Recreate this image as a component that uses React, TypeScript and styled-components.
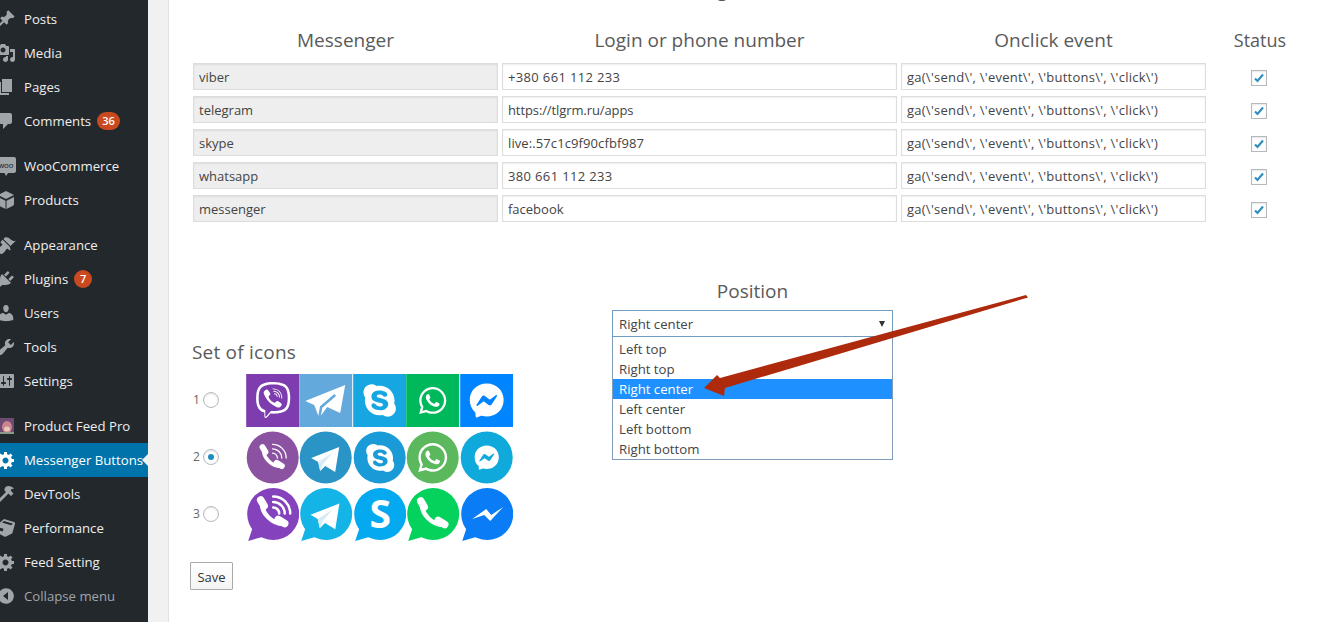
import { Fragment, ReactNode } from 'react';
import styled, { createGlobalStyle } from 'styled-components';
import { FaViber, FaSkype, FaWhatsapp, FaFacebookMessenger } from 'react-icons/fa';

const GlobalStyle = createGlobalStyle`
  html, body {
    margin: 0;
    padding: 0;
    height: 100%;
    overflow: hidden;
    background: #fff;
  }
  * {
    box-sizing: border-box;
  }
`;

const FONT = `'Open Sans', 'Noto Sans', sans-serif`;

const Page = styled.div`
  display: flex;
  width: 1333px;
  height: 622px;
  overflow: hidden;
  font-family: ${FONT};
  color: #444;
`;

const Sidebar = styled.nav`
  width: 148px;
  flex: none;
  padding-top: 2px;
  background: #23282d;
  overflow: hidden;
`;

const NavItem = styled.div<{ $gap?: boolean; $active?: boolean; $muted?: boolean }>`
  position: relative;
  display: flex;
  align-items: center;
  height: 34px;
  margin-top: ${({ $gap }) => ($gap ? '11px' : '0')};
  background: ${({ $active }) => ($active ? '#0073aa' : 'transparent')};
  color: ${({ $active, $muted }) => ($active ? '#fff' : $muted ? '#a0a5aa' : '#eee')};
  font-size: 13.2px;
  white-space: nowrap;
`;

const NavIcon = styled.svg<{ $active?: boolean }>`
  flex: none;
  width: 20px;
  height: 20px;
  margin-left: -4px;
  margin-right: 8px;
  fill: ${({ $active }) => ($active ? '#fff' : '#a0a5aa')};
`;

const Badge = styled.span`
  display: inline-block;
  min-width: 18px;
  height: 18px;
  margin-left: 6px;
  padding: 0 5px;
  border-radius: 9px;
  background: #ca4a1f;
  color: #fff;
  font-size: 11px;
  font-weight: 600;
  line-height: 18px;
  text-align: center;
`;

const Notch = styled.span`
  position: absolute;
  top: 11px;
  right: 0;
  width: 0;
  height: 0;
  border: 6px solid transparent;
  border-right-color: #f1f1f1;
  border-left-width: 0;
`;

const Gutter = styled.div`
  width: 21px;
  flex: none;
  background: #f1f1f1;
  border-right: 1px solid #e2e2e2;
`;

const Main = styled.main`
  flex: 1;
  min-width: 0;
  padding-left: 24px;
  background: #fff;
`;

const ClippedTitle = styled.h1`
  width: 1122px;
  height: 30px;
  margin: -26px 0 22px;
  padding-left: 470px;
  font-size: 20px;
  font-weight: 400;
  line-height: 30px;
  color: #555;
`;

const Table = styled.div`
  display: grid;
  grid-template-columns: 305px 395px 305px 100px;
  column-gap: 4px;
  row-gap: 6px;
`;

const HeadCell = styled.div<{ $small?: boolean }>`
  height: 31px;
  font-size: ${({ $small }) => ($small ? '18px' : '19px')};
  line-height: 29px;
  color: #5a5a5a;
  text-align: center;
`;

const Field = styled.input<{ $spread?: number }>`
  display: block;
  width: 100%;
  height: 27px;
  padding: 0 5px;
  border: 1px solid #ddd;
  border-radius: 0;
  outline: none;
  background: ${({ disabled }) => (disabled ? '#eeeeee' : '#fff')};
  box-shadow: inset 0 1px 2px rgba(0, 0, 0, 0.07);
  color: #444;
  font-family: ${FONT};
  font-size: 13px;
  letter-spacing: ${({ $spread }) => $spread ?? 0}px;
`;

const StatusCell = styled.div`
  display: flex;
  align-items: center;
  justify-content: center;
  height: 27px;
  padding: 2px 2px 0 0;
`;

const CheckBox = styled.span`
  display: flex;
  align-items: center;
  justify-content: center;
  width: 16px;
  height: 16px;
  border: 1px solid #b4b9be;
  background: #fff;
  box-shadow: inset 0 1px 2px rgba(0, 0, 0, 0.1);
`;

const Lower = styled.div`
  display: flex;
  align-items: flex-start;
  margin: 55px 0 0 -3px;
`;

const SetColumn = styled.div`
  width: 422px;
  flex: none;
  padding-top: 61px;
`;

const SectionTitle = styled.div<{ $center?: boolean }>`
  height: 28px;
  margin-left: ${({ $center }) => ($center ? '0' : '2px')};
  font-size: 19px;
  letter-spacing: ${({ $center }) => ($center ? '0' : '0.2px')};
  line-height: 28px;
  color: #5a5a5a;
  text-align: ${({ $center }) => ($center ? 'center' : 'left')};
`;

const IconRows = styled.div`
  display: flex;
  flex-direction: column;
  gap: 4px;
  margin-top: 8px;
`;

const IconRow = styled.div`
  display: flex;
  align-items: center;
  height: 53px;
  padding-left: 3px;
`;

const RowNumber = styled.span`
  width: 10px;
  flex: none;
  margin-top: -2px;
  font-size: 12px;
  color: #666;
`;

const Radio = styled.span<{ $checked?: boolean }>`
  display: flex;
  align-items: center;
  justify-content: center;
  width: 16px;
  height: 16px;
  flex: none;
  margin: -2px 27px 0 0;
  border: 1px solid #b4b9be;
  border-radius: 50%;
  background: #fff;
  box-shadow: inset 0 1px 2px rgba(0, 0, 0, 0.1);

  &::before {
    content: '';
    display: ${({ $checked }) => ($checked ? 'block' : 'none')};
    width: 6px;
    height: 6px;
    border-radius: 50%;
    background: #1e8cbe;
  }
`;

const IconStrip = styled.div`
  display: grid;
  grid-template-columns: repeat(5, 1fr);
  width: 267px;
  height: 53px;

  > svg {
    display: block;
    width: 100%;
    height: 100%;
  }
`;

const SaveButton = styled.button`
  display: block;
  width: 43px;
  height: 28px;
  margin-top: 21px;
  padding: 1px 0 0;
  border: 1px solid #aaa;
  border-radius: 1px;
  background: linear-gradient(#fff, #f4f4f4);
  color: #333;
  font-family: ${FONT};
  font-size: 13px;
`;

const PositionColumn = styled.div`
  position: relative;
  width: 281px;
  flex: none;
`;

const SelectBox = styled.div`
  display: flex;
  align-items: center;
  justify-content: space-between;
  height: 27px;
  margin-top: 5px;
  padding: 1px 7px 0 6px;
  border: 1px solid #6f9cc0;
  font-size: 13.2px;
  color: #444;
`;

const Caret = styled.span`
  width: 0;
  height: 0;
  border-top: 6px solid #333;
  border-left: 3px solid transparent;
  border-right: 3px solid transparent;
`;

const OptionList = styled.div`
  padding-top: 2px;
  border: 1px solid #7f9db9;
  border-top: none;
`;

const Option = styled.div<{ $selected?: boolean }>`
  height: 20px;
  padding-left: 6px;
  background: ${({ $selected }) => ($selected ? '#1e90ff' : 'transparent')};
  color: ${({ $selected }) => ($selected ? '#fff' : '#444')};
  font-size: 13.2px;
  line-height: 20px;
`;

const Arrow = styled.svg`
  position: absolute;
  top: 15px;
  left: 88px;
  width: 340px;
  height: 106px;
  overflow: visible;
`;

const Handset = ({ arcs, scale = 1, x = 0, y = 0, thin }: { arcs?: boolean; scale?: number; x?: number; y?: number; thin?: boolean }) => (
  <g transform={`translate(${x} ${y}) scale(${scale})`} fill="none" stroke="#fff" strokeLinecap="round">
    <path d="M17 17C16 27 27 38 38 38" strokeWidth="4.5" />
    <path d="M15.500 14L19 20" strokeWidth="7.500" />
    <path d="M33 33.500L39.500 37.500" strokeWidth="7.500" />
    {arcs && (
      <g strokeWidth={thin ? 1.6 : 2.5}>
        <path d="M28 21.500a6 6 0 0 1 6 6" />
        <path d="M28 16a11.500 11.500 0 0 1 11.500 11.500" />
        <path d="M28 10.500a17 17 0 0 1 17 17" />
      </g>
    )}
  </g>
);

const Plane = ({ shade = '#d8ecf6' }: { shade?: string }) => (
  <g>
    <polygon points="12,27 40,16 36,41 26,35 21,40 19,31" fill="#fff" />
    <polygon points="19,31 33,22 24,33 21,40" fill={shade} />
  </g>
);

const Square = ({ color, children }: { color: string; children: ReactNode }) => (
  <svg viewBox="0 0 53 53">
    <rect width="53" height="53" fill={color} />
    {children}
  </svg>
);

const Round = ({ color, children }: { color: string; children: ReactNode }) => (
  <svg viewBox="0 0 53 53">
    <circle cx="26.500" cy="26.500" r="26" fill={color} />
    {children}
  </svg>
);

const Bubble = ({ color, children }: { color: string; children: ReactNode }) => (
  <svg viewBox="0 0 53 53">
    <circle cx="27" cy="26" r="26" fill={color} />
    <polygon points="2,53 7,38 16,49" fill={color} />
    {children}
  </svg>
);

const rows: { id: number; checked?: boolean; icons: ReactNode[] }[] = [
  {
    id: 1,
    icons: [
      <Square key="v" color="#7d3daf">
        <FaViber x={9} y={8} size={36} color="#fff" />
      </Square>,
      <Square key="t" color="#64a9dc">
        <polygon points="6,27 46,11 41,39 28,33 20,44 15,31" fill="#fff" />
        <polyline points="20,44 22,33 36,21" fill="none" stroke="#64a9dc" strokeWidth="2.500" />
      </Square>,
      <Square key="s" color="#16a7e2">
        <FaSkype x={8} y={8} size={37} color="#fff" />
      </Square>,
      <Square key="w" color="#00b85c">
        <FaWhatsapp x={11} y={11} size={31} color="#fff" />
      </Square>,
      <Square key="m" color="#0084ff">
        <FaFacebookMessenger x={9} y={9} size={35} color="#fff" />
      </Square>,
    ],
  },
  {
    id: 2,
    checked: true,
    icons: [
      <Round key="v" color="#8b52a1">
        <Handset arcs thin scale={0.8} x={4} y={5} />
      </Round>,
      <Round key="t" color="#2b94c6">
        <Plane />
      </Round>,
      <Round key="s" color="#1a9bd7">
        <FaSkype x={11} y={11} size={32} color="#fff" />
      </Round>,
      <Round key="w" color="#5cb85c">
        <FaWhatsapp x={10} y={10} size={33} color="#fff" />
      </Round>,
      <Round key="m" color="#0fa9dc">
        <FaFacebookMessenger x={14} y={14} size={25} color="#fff" />
      </Round>,
    ],
  },
  {
    id: 3,
    icons: [
      <Bubble key="v" color="#8443bd">
        <Handset arcs x={-1} y={-2} />
      </Bubble>,
      <Bubble key="t" color="#14b5e6">
        <g transform="translate(-1 -1) scale(1.03)">
          <Plane />
        </g>
      </Bubble>,
      <Bubble key="s" color="#05a9f0">
        <text x="27" y="40" fill="#fff" fontFamily="'Open Sans', sans-serif" fontSize="39" fontWeight="700" textAnchor="middle">
          S
        </text>
      </Bubble>,
      <Bubble key="w" color="#04d25d">
        <Handset x={-1} y={-1} />
      </Bubble>,
      <Bubble key="m" color="#0a7cf5">
        <polygon points="12,31 26,21 31,27 43,19 30,33 24,27" fill="#fff" />
      </Bubble>,
    ],
  },
];

const channels = [
  { name: 'viber', login: '+380 661 112 233', spread: 0.35 },
  { name: 'telegram', login: 'https://tlgrm.ru/apps', spread: -0.1 },
  { name: 'skype', login: 'live:.57c1c9f90cfbf987', spread: 0.1 },
  { name: 'whatsapp', login: '380 661 112 233', spread: 0.35 },
  { name: 'messenger', login: 'facebook', spread: 0 },
];

const positions = ['Left top', 'Right top', 'Right center', 'Left center', 'Left bottom', 'Right bottom'];

const GEAR =
  'M18 12h-2.180c-.17.7-.44 1.350-.81 1.930l1.540 1.540-2.100 2.100-1.540-1.540c-.58.36-1.230.63-1.910.79V19H8v-2.180c-.68-.16-1.330-.43-1.910-.79l-1.540 1.540-2.120-2.120 1.540-1.540c-.36-.58-.63-1.230-.79-1.910H1V9.030h2.170c.16-.7.44-1.350.8-1.940L2.430 5.550l2.100-2.100 1.540 1.540c.58-.37 1.240-.64 1.930-.81V2h3v2.180c.68.16 1.330.43 1.910.79l1.540-1.540 2.120 2.120-1.540 1.540c.36.59.64 1.240.8 1.940H18V12zm-8.500 1.500c1.660 0 3-1.340 3-3s-1.340-3-3-3-3 1.340-3 3 1.340 3 3 3z';

type NavEntry = { label: string; icon: ReactNode; gap?: boolean; badge?: string; active?: boolean; muted?: boolean };

const nav: NavEntry[] = [
  {
    label: 'Posts',
    icon: <path d="M10.440 3.020l1.820-1.820 6.360 6.350-1.830 1.820c-1.050-.68-2.480-.57-3.410.36l-.75.75c-.92.93-1.040 2.350-.35 3.410l-1.830 1.820-2.410-2.410-2.800 2.790c-.42.42-3.380 2.710-3.800 2.290s1.860-3.390 2.280-3.810l2.790-2.790L4.100 9.360l1.830-1.820c1.050.69 2.480.57 3.400-.36l.75-.75c.93-.92 1.050-2.350.36-3.410z" />,
  },
  {
    label: 'Media',
    icon: <path d="M13 11V4c0-.55-.45-1-1-1h-1.670L9 1H5L3.670 3H2c-.55 0-1 .45-1 1v7c0 .55.45 1 1 1h10c.55 0 1-.45 1-1zM7 4.500c1.380 0 2.500 1.120 2.500 2.500S8.380 9.500 7 9.500 4.500 8.380 4.500 7 5.620 4.500 7 4.500zM14 6h5v10.500c0 1.380-1.120 2.500-2.500 2.500S14 17.880 14 16.500s1.120-2.500 2.500-2.500c.17 0 .34.02.5.05V9h-3V6zm-4 8.050V13h2v3.500c0 1.380-1.120 2.500-2.500 2.500S7 17.880 7 16.500 8.120 14 9.500 14c.17 0 .34.02.5.05z" />,
  },
  { label: 'Pages', icon: <path d="M6 15V2h10v13H6zm-1 1h8v2H3V5h2v11z" /> },
  {
    label: 'Comments',
    badge: '36',
    icon: <path d="M5 2h9c1.100 0 2 .9 2 2v7c0 1.100-.9 2-2 2h-2l-5 5v-5H5c-1.100 0-2-.9-2-2V4c0-1.100.9-2 2-2z" />,
  },
  {
    label: 'WooCommerce',
    gap: true,
    icon: (
      <>
        <path d="M2 1h16c1.100 0 2 .9 2 2v12c0 1.100-.9 2-2 2h-6l-2 3-1.500-3H2c-1.100 0-2-.9-2-2V3c0-1.100.9-2 2-2z" />
        <text x="10" y="12" fontSize="6" fontFamily="'Open Sans', sans-serif" fontWeight="600" fill="#23282d" textAnchor="middle">
          WOO
        </text>
      </>
    ),
  },
  {
    label: 'Products',
    icon: (
      <path d="M10 1l8 4-8 4-8-4zM2 7l7.500 3.700V19L3 15.700C2.400 15.400 2 14.800 2 14.100zM18 7v7.100c0 .7-.4 1.300-1 1.600L10.500 19v-8.300z" />
    ),
  },
  {
    label: 'Appearance',
    gap: true,
    icon: <path d="M14.480 11.060L7.410 3.990l1.500-1.500c.5-.56 2.300-.47 3.510.32 1.210.8 1.430 1.280 2.910 2.100 1.180.64 2.450 1.260 4.450.85zm-.71.71L6.700 4.700 4.930 6.470c-.39.39-.39 1.020 0 1.410l1.060 1.060c.39.39.39 1.030 0 1.420-.6.6-1.430 1.110-2.210 1.690-.35.26-.7.53-1.010.84C1.430 13.230.4 14.850 1.200 15.650l3.130 3.130c.8.8 2.440-.23 3.800-1.590.3-.3.58-.65.84-1.010.58-.78 1.090-1.610 1.690-2.210.39-.39 1.020-.39 1.420 0l1.060 1.060c.39.39 1.020.39 1.410 0z" />,
  },
  {
    label: 'Plugins',
    badge: '7',
    icon: <path d="M13.110 4.360L9.870 7.600 8 5.730l3.240-3.240c.35-.34 1.050-.2 1.560.32.52.51.66 1.210.31 1.550zm-8 1.770l.91-1.120 9.010 9.010-1.190.84c-.71.71-2.630 1.160-3.820 1.160H6.140L4.900 17.260c-.59.59-1.540.59-2.120 0-.59-.58-.59-1.530 0-2.120l1.240-1.240v-3.880c0-1.130.4-3.190 1.090-3.890zm7.260 3.970l3.240-3.240c.34-.35 1.040-.21 1.550.31.52.51.66 1.210.31 1.550l-3.240 3.250z" />,
  },
  {
    label: 'Users',
    icon: <path d="M10 9.250c-2.270 0-2.730-3.440-2.730-3.440C7 4.020 7.820 2 9.970 2c2.160 0 2.980 2.020 2.710 3.810 0 0-.41 3.440-2.680 3.440zm0 2.570L12.720 10c2.390 0 4.520 2.330 4.520 4.530v2.490s-3.650 1.130-7.240 1.130c-3.650 0-7.240-1.130-7.240-1.130v-2.490c0-2.250 1.940-4.480 4.470-4.480z" />,
  },
  {
    label: 'Tools',
    icon: <path d="M16.680 9.770c-1.340 1.340-3.300 1.670-4.950.99l-5.410 6.520c-.99.99-2.590.99-3.580 0s-.99-2.590 0-3.570l6.520-5.420c-.68-1.650-.35-3.610.99-4.950 1.280-1.280 3.120-1.620 4.720-1.060l-2.890 2.890 2.820 2.820 2.860-2.870c.53 1.580.18 3.390-1.080 4.650z" />,
  },
  {
    label: 'Settings',
    icon: <path d="M18 16V4c0-.55-.45-1-1-1H3c-.55 0-1 .45-1 1v12c0 .55.45 1 1 1h14c.55 0 1-.45 1-1zM8 11h1c.55 0 1 .45 1 1s-.45 1-1 1H8v1.500c0 .28-.22.5-.5.5s-.5-.22-.5-.5V13H6c-.55 0-1-.45-1-1s.45-1 1-1h1V5.500c0-.28.22-.5.5-.5s.5.22.5.5V11zm5-2h-1c-.55 0-1-.45-1-1s.45-1 1-1h1V5.500c0-.28.22-.5.5-.5s.5.22.5.5V7h1c.55 0 1 .45 1 1s-.45 1-1 1h-1v5.500c0 .28-.22.5-.5.5s-.5-.22-.5-.5V9z" />,
  },
  {
    label: 'Product Feed Pro',
    gap: true,
    icon: (
      <>
        <rect x="0" y="2" width="18" height="16" fill="#6f4a73" />
        <ellipse cx="11" cy="11" rx="5" ry="6" fill="#c9848f" />
        <ellipse cx="11" cy="13" rx="3" ry="2.500" fill="#e5cbb8" />
        <rect x="0" y="16" width="18" height="2" fill="#8a9a86" />
      </>
    ),
  },
  { label: 'Messenger Buttons', active: true, icon: <path fillRule="evenodd" d={GEAR} /> },
  {
    label: 'DevTools',
    icon: <path d="M3 19l-2-2 9-9-1.500-1.500C8 4 10 2 12.500 2c2 0 4 1 5.500 2.500l-2 .5c-1 .3-1.400 1-1 2l2.500 2.500-2.500 2.500L12.500 9.500z" />,
  },
  {
    label: 'Performance',
    icon: (
      <path d="M8 1l10 3c.8.3 1.200 1 1 1.800l-2.500 9c-.2.7-.8 1.200-1.500 1.200l-5 2.500c-.6.3-1.200.3-1.800 0L1.500 15C.8 14.700.5 14 .7 13.300L3 5.500zM6 4.500l9 2.800 2-1.500L8 3zM3.500 9.500l-.8 2.800 4 1.200.8-2.800z" fillRule="evenodd" />
    ),
  },
  { label: 'Feed Setting', icon: <path fillRule="evenodd" d={GEAR} /> },
  {
    label: 'Collapse menu',
    muted: true,
    icon: <path fillRule="evenodd" d="M10 2.160c4.330 0 7.840 3.510 7.840 7.840s-3.510 7.840-7.840 7.840S2.160 14.330 2.160 10 5.670 2.160 10 2.160zM12 14V6l-5 4z" />,
  },
];

export default function App() {
  return (
    <Page>
      <GlobalStyle />
      <Sidebar>
        {nav.map((item) => (
          <NavItem key={item.label} $gap={item.gap} $active={item.active} $muted={item.muted}>
            <NavIcon viewBox="0 0 20 20" $active={item.active}>
              {item.icon}
            </NavIcon>
            {item.label}
            {item.badge && <Badge>{item.badge}</Badge>}
            {item.active && <Notch />}
          </NavItem>
        ))}
      </Sidebar>
      <Gutter />
      <Main>
        <ClippedTitle>Settings</ClippedTitle>
        <Table>
          <HeadCell>Messenger</HeadCell>
          <HeadCell>Login or phone number</HeadCell>
          <HeadCell>Onclick event</HeadCell>
          <HeadCell $small>Status</HeadCell>
          {channels.map((c) => (
            <Fragment key={c.name}>
              <Field disabled readOnly value={c.name} />
              <Field readOnly value={c.login} $spread={c.spread} />
              <Field readOnly value={"ga(\\'send\\', \\'event\\', \\'buttons\\', \\'click\\')"} $spread={0.25} />
              <StatusCell>
                <CheckBox>
                  <svg width="14" height="14" viewBox="0 0 14 14">
                    <path d="M3 7.500L5.500 10L11 3.500" fill="none" stroke="#2f8fc0" strokeWidth="2.200" />
                  </svg>
                </CheckBox>
              </StatusCell>
            </Fragment>
          ))}
        </Table>
        <Lower>
          <SetColumn>
            <SectionTitle>Set of icons</SectionTitle>
            <IconRows>
              {rows.map((row) => (
                <IconRow key={row.id}>
                  <RowNumber>{row.id}</RowNumber>
                  <Radio $checked={row.checked} />
                  <IconStrip>{row.icons}</IconStrip>
                </IconRow>
              ))}
            </IconRows>
            <SaveButton>Save</SaveButton>
          </SetColumn>
          <PositionColumn>
            <SectionTitle $center>Position</SectionTitle>
            <SelectBox>
              Right center
              <Caret />
            </SelectBox>
            <OptionList>
              {positions.map((p) => (
                <Option key={p} $selected={p === 'Right center'}>
                  {p}
                </Option>
              ))}
            </OptionList>
            <Arrow viewBox="700 292 340 106">
              <polygon points="1026,295 1028,297.500 725,388 724,396 704,388 717,375 720,378" fill="#ae2a0c" />
            </Arrow>
          </PositionColumn>
        </Lower>
      </Main>
    </Page>
  );
}
